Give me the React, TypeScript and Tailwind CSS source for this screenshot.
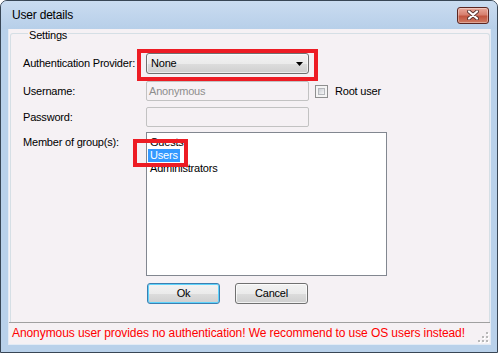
import React from "react";

const win7Btn =
  "bg-[linear-gradient(#f2f2f2_0%,#ebebeb_50%,#dddddd_50%,#cfcfcf_100%)]";

function CloseButton() {
  return (
    <div className="w-[32px] h-[17px] flex items-center justify-center rounded-[3px] border border-[#5b2621] bg-[linear-gradient(#e9a99b_0%,#d7806f_45%,#c2553f_55%,#cf7b63_100%)] shadow-[inset_0_0_0_1px_rgba(255,255,255,0.35)]">
      <svg width="12" height="10" viewBox="0 0 12 10">
        <path d="M2 1.5 L10 8.5 M10 1.5 L2 8.5" stroke="#5a3430" strokeWidth="4" strokeLinecap="round" />
        <path d="M2 1.5 L10 8.5 M10 1.5 L2 8.5" stroke="#ffffff" strokeWidth="2.2" strokeLinecap="round" />
      </svg>
    </div>
  );
}

function Combo({ value }: { value: string }) {
  return (
    <div
      className={`w-[163px] h-[21px] flex items-center justify-between pl-[4px] pr-[5px] rounded-[3px] border border-[#707070] ${win7Btn} shadow-[inset_0_0_0_1px_rgba(255,255,255,0.6)]`}
    >
      <span>{value}</span>
      <svg width="7" height="4" viewBox="0 0 7 4">
        <path d="M0 0 H7 L3.5 4 Z" fill="#000" />
      </svg>
    </div>
  );
}

function TextBox({ value }: { value?: string }) {
  return (
    <div className="w-[163px] h-[20px] flex items-center pl-[2px] rounded-[2px] border border-[#c2c2c2] bg-[#f5f1f4] text-[#8d8d8d]">
      {value}
    </div>
  );
}

function CheckBox() {
  return (
    <div className="w-[13px] h-[13px] border border-[#8e8f8f] bg-[#f4f4f4] p-[2px]">
      <div className="w-full h-full border border-[#b5b8bc] bg-[linear-gradient(135deg,#cbcfd5,#f6f6f6)]" />
    </div>
  );
}

function Button({ label, focused }: { label: string; focused?: boolean }) {
  return (
    <div
      className={`w-[73px] h-[21px] flex items-center justify-center rounded-[3px] border ${win7Btn} ${
        focused
          ? "border-[#3c7fb1] shadow-[inset_0_0_0_1px_#5fd3fb]"
          : "border-[#707070] shadow-[inset_0_0_0_1px_rgba(255,255,255,0.7)]"
      }`}
    >
      {label}
    </div>
  );
}

function Grip() {
  const dots = [
    [9, 1],
    [9, 5],
    [5, 5],
    [9, 9],
    [5, 9],
    [1, 9],
  ];
  return (
    <svg width="12" height="12" viewBox="0 0 12 12">
      {dots.map(([x, y]) => (
        <g key={`${x}-${y}`}>
          <rect x={x + 1} y={y + 1} width="2" height="2" fill="#ffffff" />
          <rect x={x} y={y} width="2" height="2" fill="#b8b8b8" />
        </g>
      ))}
    </svg>
  );
}

export default function App() {
  return (
    <div className="relative w-[499px] h-[355px] bg-white font-['Liberation_Sans',Arial,sans-serif] text-[11px] leading-[13px] tracking-[-0.2px] text-black">
      <div className="w-[498px] h-[353px] flex flex-col rounded-t-[7px] border border-[#384655] bg-[#b9d1ea]">
        {/* title bar */}
        <div className="h-[28px] flex items-center justify-between pl-[11px] pr-[8px] rounded-t-[6px] bg-gradient-to-b from-[#cadcf0] to-[#b7cfe9]">
          <span className="text-[12px] leading-[14px] text-black">User details</span>
          <CloseButton />
        </div>

        {/* client area */}
        <div className="flex-1 ml-[7px] mr-[6px] mb-[7px] flex flex-col bg-[#f5f1f4] border-x border-b border-[#e3ebf5]">
          <fieldset className="flex-1 ml-[1px] pl-[12px] pt-[16px] rounded-t-[3px] border border-b-0 border-[#d5dfe5]">
            <legend className="ml-[5px] px-[1px] pt-[4px] leading-[4px]">Settings</legend>

            <div className="flex items-center h-[21px]">
              <span className="w-[123px]">Authentication Provider:</span>
              <Combo value="None" />
            </div>

            <div className="flex items-center h-[20px] mt-[7px]">
              <span className="w-[123px]">Username:</span>
              <TextBox value="Anonymous" />
              <div className="ml-[6px]">
                <CheckBox />
              </div>
              <span className="ml-[7px]">Root user</span>
            </div>

            <div className="flex items-center h-[20px] mt-[6px]">
              <span className="w-[123px]">Password:</span>
              <TextBox />
            </div>

            <div className="flex mt-[5px]">
              <span className="w-[123px] pt-[4px]">Member of group(s):</span>
              <div className="w-[241px] h-[144px] border border-[#828790] bg-white pt-[3px] pl-[1px] flex flex-col items-start">
                <span className="px-[2px]">Guests</span>
                <span className="px-[2px] bg-[#3399ff] text-white">Users</span>
                <span className="px-[2px]">Administrators</span>
              </div>
            </div>

            <div className="flex mt-[7px] pl-[124px] gap-[15px]">
              <Button label="Ok" focused />
              <Button label="Cancel" />
            </div>
          </fieldset>

          {/* status strip */}
          <div className="h-[22px] flex items-center border-t border-[#a0a0a0] pl-[3px] bg-[#f5f1f4]">
            <span className="text-[12px] tracking-[-0.08px] text-[#ff0000]">
              Anonymous user provides no authentication! We recommend to use OS users instead!
            </span>
            <div className="ml-auto mr-[1px] self-end mb-[1px]">
              <Grip />
            </div>
          </div>
        </div>
      </div>

      {/* annotation highlights */}
      <div className="absolute left-[137px] top-[49px] w-[181px] h-[32px] border-4 border-[#ed1c24]" />
      <div className="absolute left-[133px] top-[139px] w-[55px] h-[28px] border-4 border-[#ed1c24]" />
    </div>
  );
}
